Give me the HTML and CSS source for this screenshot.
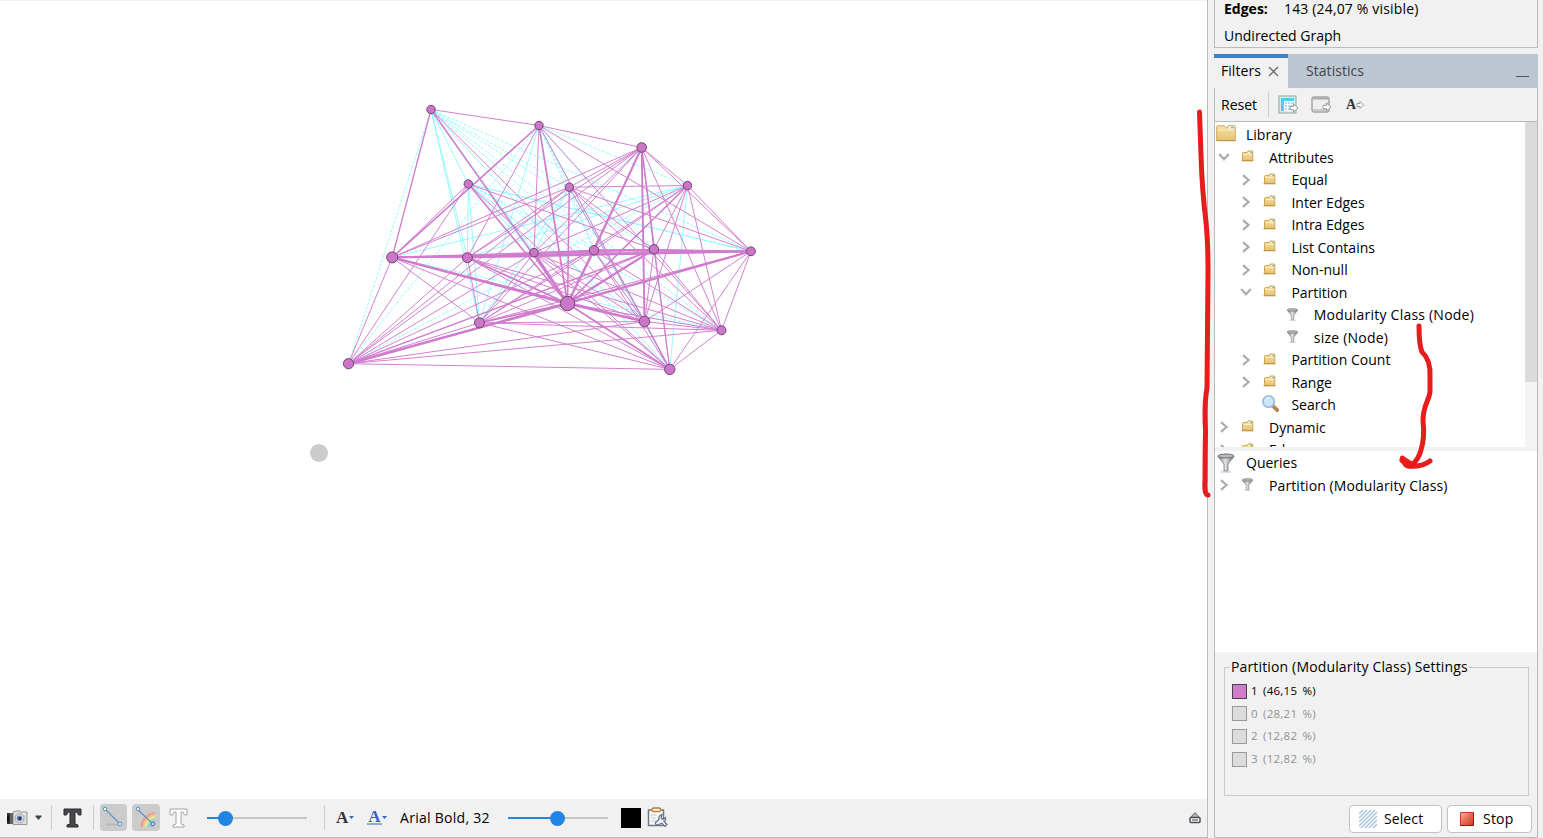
FILE: index.html
```
<!DOCTYPE html>
<html lang="en">
<head>
<meta charset="utf-8">
<title>Graph</title>
<link rel="stylesheet" href="styles.css">
</head>
<body>
<svg class="defs" width="0" height="0">
<defs>
<linearGradient id="gold" x1="0" y1="0" x2="0" y2="1"><stop offset="0" stop-color="#f8e3a4"/><stop offset="1" stop-color="#e5c173"/></linearGradient>
<linearGradient id="metal" x1="0" y1="0" x2="1" y2="0"><stop offset="0" stop-color="#6d6d70"/><stop offset=".45" stop-color="#e4e4ee"/><stop offset="1" stop-color="#707076"/></linearGradient>
<linearGradient id="red" x1="0" y1="0" x2="1" y2="1"><stop offset="0" stop-color="#f6b9a4"/><stop offset=".5" stop-color="#e66a50"/><stop offset="1" stop-color="#d03a22"/></linearGradient>
<symbol id="folder" viewBox="0 0 20 17"><path d="M.7 15.700V1.800q0-1 1-1h7l1.500 1.800h1.500V1.500q0-.8.8-.8h5.800q1 0 1 1v14z" fill="url(#gold)" stroke="#d1ab5c" stroke-width="1"/><path d="M1.500 5H19" stroke="#f9edc4"/><path d="M13 1.700h5v2h-5z" fill="#fff"/><path d="M15 2h2.500v1.300H15z" fill="#39aee0"/><path d="M.5 15.600h19" stroke="#b99551"/></symbol>
<symbol id="folder-small" viewBox="0 0 13 12"><path d="M1.500 10.500V3.500q0-1 1-1H6l1-1.500h4q.8 0 .8.8v8.700z" fill="url(#gold)" stroke="#d0a44d"/><path d="M2.500 4.500H11" stroke="#fbedbd"/><path d="M7.500 2h3.500v1.200H7.500z" fill="#fff"/><path d="M9.500 2H11v1.200H9.500z" fill="#45acd4"/><path d="M.5 10.800h12" stroke="#bd9240"/></symbol>
<symbol id="funnel" viewBox="0 0 18 20"><path d="M1 3.500L7 11v7h4v-7l6-7.500z" fill="url(#metal)" stroke="#77777b" stroke-width=".8"/><ellipse cx="9" cy="3" rx="8" ry="2" fill="#b9b9bb" stroke="#707073"/><path d="M4 19h10" stroke="#bbb"/></symbol>
<symbol id="right" viewBox="0 0 10 12"><path d="M2 1.200L7.500 6 2 10.800" fill="none" stroke="#adadad" stroke-width="2.300"/></symbol>
<symbol id="down" viewBox="0 0 12 10"><path d="M1.200 2L6 7.200 10.800 2" fill="none" stroke="#adadad" stroke-width="2.300"/></symbol>
<symbol id="arrow" viewBox="0 0 10 10"><path d="M1 3.300h3.500V1L9 5 4.500 9V6.700H1z" fill="#fff" stroke="#959b9b" stroke-width="1"/></symbol>
</defs>
</svg>
<div class="app">
  <main class="view">
    <div class="canvas">
      <svg class="graph" id="graph" width="1207" height="799"></svg>
    </div>
    <div class="bar">
      <svg class="camera" width="22" height="18"><path d="M7 3l3-1h4l1 1h6v12.500H7z" fill="#d9d9d9" stroke="#999"/><path d="M1 4h5.500v11H1z" fill="#333"/><path d="M4 4h3v11H4z" fill="#666"/><path d="M1 6.500h2v6H1z" fill="#111"/><circle cx="13.500" cy="9.300" r="4.500" fill="#e6e6ee" stroke="#a3a3ad"/><circle cx="13.500" cy="9.300" r="2.800" fill="#6b83b3"/><circle cx="13.800" cy="9.500" r="1.400" fill="#232d54"/><path d="M17 5h3" stroke="#fff"/></svg>
      <svg class="caret" width="7" height="6"><path d="M.5.500h6v1L3.500 5l-3-3.500z" fill="#34455c"/></svg>
      <i class="sep s1"></i>
      <svg class="tee" width="19" height="20"><path d="M1 1h17v6h-2.500L14 4h-2v12l3 1v2H4v-2l3-1V4H5L3.500 7H1z" fill="#47474c" stroke="#2b2b2f"/></svg>
      <i class="sep s2"></i>
      <span class="toggle"><svg width="27" height="27"><path d="M6 20.500h15" stroke="#b8b8b8" stroke-width="2"/><path d="M5.500 5.500l14 14" stroke="#6594c8" stroke-width="1.300"/><circle cx="5" cy="5" r="1.800" fill="#edf5ff" stroke="#5c8dc5"/><circle cx="20" cy="20" r="1.800" fill="#edf5ff" stroke="#5c8dc5"/></svg></span>
      <span class="toggle t2"><svg width="27" height="27"><g fill="none" stroke-width="2.200"><path d="M9.500 23Q11 11 23 9" stroke="#ef9a91"/><path d="M11.500 23Q13 13 23 11" stroke="#f4c588"/><path d="M13.500 23Q15 15 23 13" stroke="#e5e99a"/><path d="M15.500 23Q17 17 23 15" stroke="#9bdbad"/><path d="M17.500 23Q19 19 23 17" stroke="#9bbce9"/><path d="M19.500 23Q20 21 23 19" stroke="#c7a2dc"/></g><path d="M5.500 5.500l15 14" stroke="#6594c8" stroke-width="1.300"/><circle cx="6" cy="5" r="1.800" fill="#edf5ff" stroke="#5c8dc5"/><circle cx="21" cy="20" r="1.800" fill="#c8d8f4" stroke="#5577bc"/></svg></span>
      <svg class="tee t3" width="19" height="20"><path d="M1 1h17v6h-2.500L14 4h-2v12l3 1v2H4v-2l3-1V4H5L3.500 7H1z" fill="#fff" stroke="#a4a4a4"/></svg>
      <span class="slider a"><i></i></span>
      <i class="sep s3"></i>
      <b class="letter">A</b><svg class="mini" width="5" height="4"><path d="M0 0h5L2.500 3z" fill="#3468bd"/></svg>
      <b class="letter blue">A</b><svg class="mini" width="5" height="4"><path d="M0 0h5L2.500 3z" fill="#3468bd"/></svg>
      <span class="font">Arial Bold, 32</span>
      <span class="slider b"><i></i></span>
      <i class="swatch"></i>
      <svg class="clip" width="21" height="21"><path d="M1.500 3h15v15.500h-15z" fill="#f9fafc" stroke="#6c7788" stroke-width="1.500"/><path d="M4 8h6M4 11h5M4 14h6" stroke="#c0c8d4"/><rect x="5" y="1" width="8.500" height="3.500" rx="1.500" fill="#fff" stroke="#bd7a28" stroke-width="1.300"/><path d="M8.500 15.500L12 12.500Q11 8.500 15 7.500L14 11l2 1.500 2.500-2q.5 3-1.500 4l3 3-2 2-3.200-3.200L11 18q-3 0-2.500-2.500z" fill="#edf0f3" stroke="#667083" stroke-width="1.200"/></svg>
      <svg class="eject" width="12" height="13"><path d="M1.500 6.500L6 1.500l4.500 5z" fill="#b0b0b4" stroke="#66666d"/><rect x="1" y="6.500" width="10" height="5" rx="1" fill="#fff" stroke="#4b4b54" stroke-width="1.500"/><path d="M3 9h6" stroke="#34343e"/></svg>
    </div>
  </main>
  <aside class="side">
    <section class="context"><p><b>Edges:</b><span>143 (24,07 % visible)</span></p><p>Undirected Graph</p></section>
    <section class="panel">
      <div class="tabs"><div class="tab on"><span>Filters</span><svg width="11" height="11"><path d="M1 1l9 9M10 1l-9 9" stroke="#6b6b6b" stroke-width="1.300"/></svg></div><div class="tab">Statistics</div><i class="min"></i></div>
      <div class="tools"><span>Reset</span><i class="sep"></i>
        <svg class="ic1" width="20" height="20"><rect x="1" y="1" width="17" height="17" fill="#e0e9e9" stroke="#8ba5a5"/><path d="M3 3h13v13H3z" fill="#fff"/><path d="M3 3h13v3H3zM3 6h3v10H3z" fill="#5cc6ec"/><path d="M7 8h2M10 8h2M13 8h3M7 11h2M10 11h2M13 11h3M7 14h2M10 14h2" stroke="#a6e0f4" stroke-width="2"/><use href="#arrow" x="11" y="8" width="10" height="10"/></svg>
        <svg class="ic2" width="20" height="20"><rect x="1" y="2" width="17" height="15" rx="1.500" fill="#eee" stroke="#7e7e7e"/><path d="M2 3.500h15" stroke="#aaa" stroke-width="2"/><path d="M2 15h15" stroke="#cacaca" stroke-width="2"/><use href="#arrow" x="11" y="7" width="10" height="10"/></svg>
        <b>A</b><svg class="ic3" width="9" height="10"><path d="M1 3.500h3V1.500L7.500 5 4 8.500v-2H1z" fill="#fff" stroke="#9b9b9b"/></svg>
      </div>
      <div class="library">
        <div class="tree" id="tree"></div>
        <div class="track"><i></i></div>
      </div>
      <div class="queries tree" id="queries"></div>
      <div class="lower">
        <fieldset><legend>Partition (Modularity Class) Settings</legend>
          <p class="active"><i></i>1 (46,15 %)</p><p><i></i>0 (28,21 %)</p><p><i></i>2 (12,82 %)</p><p><i></i>3 (12,82 %)</p>
        </fieldset>
        <div class="actions">
          <button class="select"><svg width="18" height="18"><path d="M0 4l4-4M0 8l8-8M0 12L12 0M0 16L16 0M2 18L18 2M6 18L18 6M10 18l8-8M14 18l4-4" stroke="#a6c4df" stroke-width="1.500"/></svg>Select</button>
          <button class="stop"><svg width="14" height="14"><path d="M.5.500h13v13H.5z" fill="url(#red)" stroke="#c43a29"/><path d="M.5 13.500h13V.5" fill="none" stroke="#842016"/></svg>Stop</button>
        </div>
      </div>
    </section>
  </aside>
  <svg class="marks" width="1543" height="838"><g fill="none" stroke="#e81c1c" stroke-width="5" stroke-linecap="round" stroke-linejoin="round"><path d="M1199.500 112L1201 155Q1202 190 1206 222Q1208 242 1208 270L1207 388Q1204 405 1205.500 430Q1205 455 1205 480Q1204 495 1208 495"/><path d="M1419 326Q1419 345 1422 352Q1431 360 1430 377V392C1429 401 1423 405 1423 421Q1425 437 1421 450Q1419 459 1411 466Q1422 467 1430 461"/><path d="M1402.500 458Q1405 468 1411 466" /><path d="M1403 460L1411 465" stroke-width="7"/></g></svg>
</div>
<script src="app.js"></script>
</body>
</html>
```
FILE: styles.css
```
* { box-sizing: border-box; }
body { margin: 0; overflow: hidden; background: #f1f1f1; color: #000; font: 14px/20px "Open Sans", sans-serif; }
p { margin: 0; }
svg { display: block; flex: none; }
.defs { position: absolute; }
.app { position: relative; display: flex; width: 1543px; height: 838px; }
.view { width: 1208px; height: 838px; border-right: 1px solid #bbb; border-bottom: 1px solid #bbb; display: flex; flex-direction: column; }
.canvas { height: 799px; background: #fff; border-top: 1px solid #f1f1f1; }
.graph { margin-top: -1px; }
.bar { flex: 1; display: flex; align-items: center; padding: 0 6px 1px; }
.sep { width: 1px; height: 25px; background: #ccc; flex: none; }
.caret { margin-left: 7px; }
.s1 { margin-left: 9px; }
.tee { margin-left: 11px; }
.s2 { margin-left: 11px; }
.toggle { margin-left: 6px; width: 27px; height: 27px; border-radius: 4px; background: #cbcbcb; flex: none; }
.t2 { margin-left: 5px; width: 28px; }
.t3 { margin-left: 9px; }
.slider { position: relative; width: 100px; height: 2px; background: #c6c6c6; flex: none; }
.slider i { position: absolute; top: -6px; width: 15px; height: 15px; border-radius: 50%; background: #2185e3; }
.slider.a { margin-left: 19px; background: linear-gradient(90deg, #2185e3 19px, #c6c6c6 19px); }
.slider.a i { left: 11px; }
.slider.b { margin-left: 17px; background: linear-gradient(90deg, #2185e3 50px, #c6c6c6 50px); }
.slider.b i { left: 42px; }
.s3 { margin-left: 17px; }
.letter { margin-left: 11px; font: bold 17px/18px "Liberation Serif", serif; color: #333; width: 13px; }
.letter.blue { margin-left: 13px; width: 15px; color: #3c5fc4; border-bottom: 2px solid #8fa8e4; line-height: 13px; text-align: center; }
.font { margin-left: 13px; width: 91px; white-space: nowrap; letter-spacing: .28px; }
.swatch { width: 20px; height: 20px; background: #000; margin-left: 13px; flex: none; }
.clip { margin-left: 6px; }
.eject { margin-left: auto; }
.side { width: 324px; margin-left: 6px; height: 838px; }
.context { height: 48px; border: 1px solid #bbb; border-top: 0; padding-left: 9px; }
.context p { height: 27px; line-height: 18px; display: flex; }
.context b { width: 60px; }
.context span { letter-spacing: .16px; }
.panel { margin-top: 6px; height: 784px; border: solid #bbb; border-width: 0 1px 1px; display: flex; flex-direction: column; }
.tabs { height: 34px; margin: 0 -1px; background: #bdc7d1; display: flex; flex: none; }
.tab { width: 140px; padding: 7px 0 0 18px; color: #444; letter-spacing: .05px; }
.tab.on { display: flex; width: 74px; background: #f1f1f1; border-top: 4px solid #3b80c5; padding: 3px 0 0 7px; color: #000; }
.tab.on svg { margin: 5px 0 0 7px; }
.min { width: 13px; height: 1px; background: #555; margin: 22px 9px 0 auto; }
.tools { height: 34px; flex: none; display: flex; align-items: center; padding-left: 6px; border-bottom: 1px solid #bbb; }
.tools .sep { margin-left: 10px; }
.tools span { width: 37px; }
.ic1 { margin-left: 9px; }
.ic2 { margin-left: 13px; }
.tools b { margin-left: 15px; font: bold 14px/20px "Liberation Serif", serif; color: #333; width: 10px; }
.library { height: 325px; display: flex; background: #fff; flex: none; overflow: hidden; }
.tree { flex: 1; padding-top: 2px; }
.row { height: 22.5px; display: flex; align-items: center; white-space: nowrap; }
.row .twist { width: 12px; height: 12px; margin: -1px 11px 0 0; }
.row .icon { width: 13px; height: 12px; margin: -3px 15px 0 0; }
.row.root .icon { width: 20px; height: 17px; margin: -3px 10px 0 1px; }
.row .search { width: 19px; height: 19px; margin: -4px 11px 0 -2px; }
.row .icon.funnel { width: 13px; height: 13px; margin-top: -2px; }
.row.root .icon.funnel { width: 18px; height: 20px; margin: -1px 11px 0 2px; }
.wide { letter-spacing: .22px; }
.track { width: 12px; background: #f4f4f4; }
.track i { display: block; height: 260px; background: #dbdbdb; }
.queries { flex: none; height: 201px; margin-top: 4px; padding-top: 1px; background: #fff; }
.queries .wide { letter-spacing: .1px; }
.lower { flex: 1; padding: 5px 8px 0 9px; }
fieldset { margin: 0; padding: 3px 7px; width: 305px; height: 139px; border: 1px solid #c9c9c9; min-width: 0; }
legend { padding: 0 1px; margin-left: -2px; line-height: 20px; white-space: nowrap; letter-spacing: .15px; }
fieldset p { display: flex; align-items: center; height: 22.600px; font-size: 11.500px; color: #929292; letter-spacing: .25px; word-spacing: 2px; }
fieldset p i { width: 15px; height: 15px; border: 1px solid #999; background: #dcdcdc; margin-right: 4px; }
fieldset .active { color: #000; }
fieldset .active i { background: #d17bcc; border-color: #444; }
.actions { display: flex; justify-content: flex-end; gap: 5px; margin: 9px -3px 0 0; }
button { height: 28px; padding: 0; border: 1px solid #c2c2c2; border-radius: 4px; background: #fff; color: #000; font: 14px/20px "Open Sans", sans-serif; display: flex; align-items: center; }
.select { width: 93px; padding-left: 9px; gap: 7px; letter-spacing: .1px; }
.stop { width: 85px; padding-left: 12px; gap: 9px; letter-spacing: .2px; }
.marks { position: absolute; left: 0; top: 0; pointer-events: none; }
```
FILE: app.js
```
const nodes = {
  A: [431, 109.5, 4.2], B: [539, 125.5, 4.2], C: [641.7, 147.5, 4.8], D: [468.3, 184, 4.2],
  E: [569.3, 187.2, 4.2], F: [687.5, 185.5, 4.2], G: [392.2, 257.4, 5.5], H: [467.4, 257.7, 5],
  I: [534, 252.6, 4.3], J: [594, 250.2, 4.7], K: [654, 249.3, 4.7], L: [751, 251.3, 4.4],
  M: [567.5, 303.5, 7.2], N: [479.5, 322.8, 5], O: [644.5, 321.5, 5.3], P: [721.5, 330.3, 4.5],
  Q: [348.5, 363.7, 5.1], R: [669.8, 369.4, 5.2]
};
const cyan = { A: 'DEHIJKLNPQR', B: 'EFJKNQR', D: 'HIJLNOP', E: 'IJNR', F: 'GHQR', G: 'P', I: 'N', J: 'O', L: 'D', M: 'P' };
const pink = {
  A: 'BGMO', B: 'CGHIMOPL', C: 'EFGHIJKLMNOPQR', D: 'GKMQR', E: 'FGHKLMOPQ', F: 'IJKLMNOP',
  G: 'HIKLMNOQR', H: 'IJKLMNOPQR', I: 'JKLMNOPQR', J: 'KLMNOPQR', K: 'LMNOPQR', L: 'MNOPQR',
  M: 'NOPQR', N: 'OPQR', O: 'PQR', P: 'QR', Q: 'R'
};
const heavy = { CJ: 2, CO: 1.9, GM: 2.5, LM: 2.2, GL: 2.2, HL: 1.7, IM: 2.6, JM: 2.3, KM: 2.2, MO: 2.6, MQ: 2.5, MR: 1.8, DM: 1.6, AM: 1.5, BM: 1.7, BG: 1.6, FM: 1.5, HM: 1.8, EM: 1.5, AG: 1.3, MN: 1.7, JL: 1.8, OR: 1.5, CK: 1.4, KQ: 1.4 };
let out = '';
const draw = (groups, color, base) => {
  for (const a in groups) for (const b of groups[a]) {
    const p = nodes[a], q = nodes[b], w = heavy[a + b] || heavy[b + a] || base;
    const dash = base < .9 && 'BEFJKLPQ'.includes(b) ? ' stroke-dasharray="3 1.5"' : '';
    out += `<line x1="${p[0]}" y1="${p[1]}" x2="${q[0]}" y2="${q[1]}" stroke="${color}" stroke-width="${w}"${dash}/>`;
  }
};
draw(cyan, '#7df9ff', .8);
draw(pink, '#d17bcd', .95);
for (const [x, y, r] of Object.values(nodes)) out += `<circle cx="${x}" cy="${y}" r="${r}" fill="#cb76c8" stroke="#6d466d"/>`;
out += '<circle cx="319" cy="453" r="9" fill="#ccc"/>';
document.getElementById('graph').innerHTML = out;

const rows = [
  [0, '', 'folder', 'Library'], [1, 'down', 'folder', 'Attributes'], [2, 'right', 'folder', 'Equal'],
  [2, 'right', 'folder', 'Inter Edges'], [2, 'right', 'folder', 'Intra Edges'], [2, 'right', 'folder', 'List Contains'],
  [2, 'right', 'folder', 'Non-null'], [2, 'down', 'folder', 'Partition'], [3, '', 'funnel', 'Modularity Class (Node)'],
  [3, '', 'funnel', 'size (Node)'], [2, 'right', 'folder', 'Partition Count'], [2, 'right', 'folder', 'Range'],
  [2, '', 'search', 'Search'], [1, 'right', 'folder', 'Dynamic'], [1, 'right', 'folder', 'Edges']
];
const search = '<svg class="search" viewBox="0 0 20 20"><path d="M12 12l5 5" stroke="#b88655" stroke-width="4" stroke-linecap="round"/><circle cx="8" cy="8" r="6" fill="#cbe6fb" stroke="#9dbfe3" stroke-width="2"/><path d="M5 7q1-3 4-3" fill="none" stroke="#fff"/></svg>';
const row = ([depth, twist, icon, text]) => {
  const t = depth ? `<svg class="twist">${twist ? `<use href="#${twist}" width="12" height="12"/>` : ''}</svg>` : '';
  const ref = icon === 'folder' && depth ? 'folder-small' : icon;
  const i = icon === 'search' ? search : `<svg class="icon ${icon}"><use href="#${ref}" width="100%" height="100%"/></svg>`;
  return `<div class="row${depth ? '' : ' root'}" style="padding-left:${depth ? 3 + (depth - 1) * 22.4 : 0}px">${t}${i}<span${text.includes('(') ? ' class="wide"' : ''}>${text}</span></div>`;
};
document.getElementById('tree').innerHTML = rows.map(row).join('');
document.getElementById('queries').innerHTML = [[0, '', 'funnel', 'Queries'], [1, 'right', 'funnel', 'Partition (Modularity Class)']].map(row).join('');
```
